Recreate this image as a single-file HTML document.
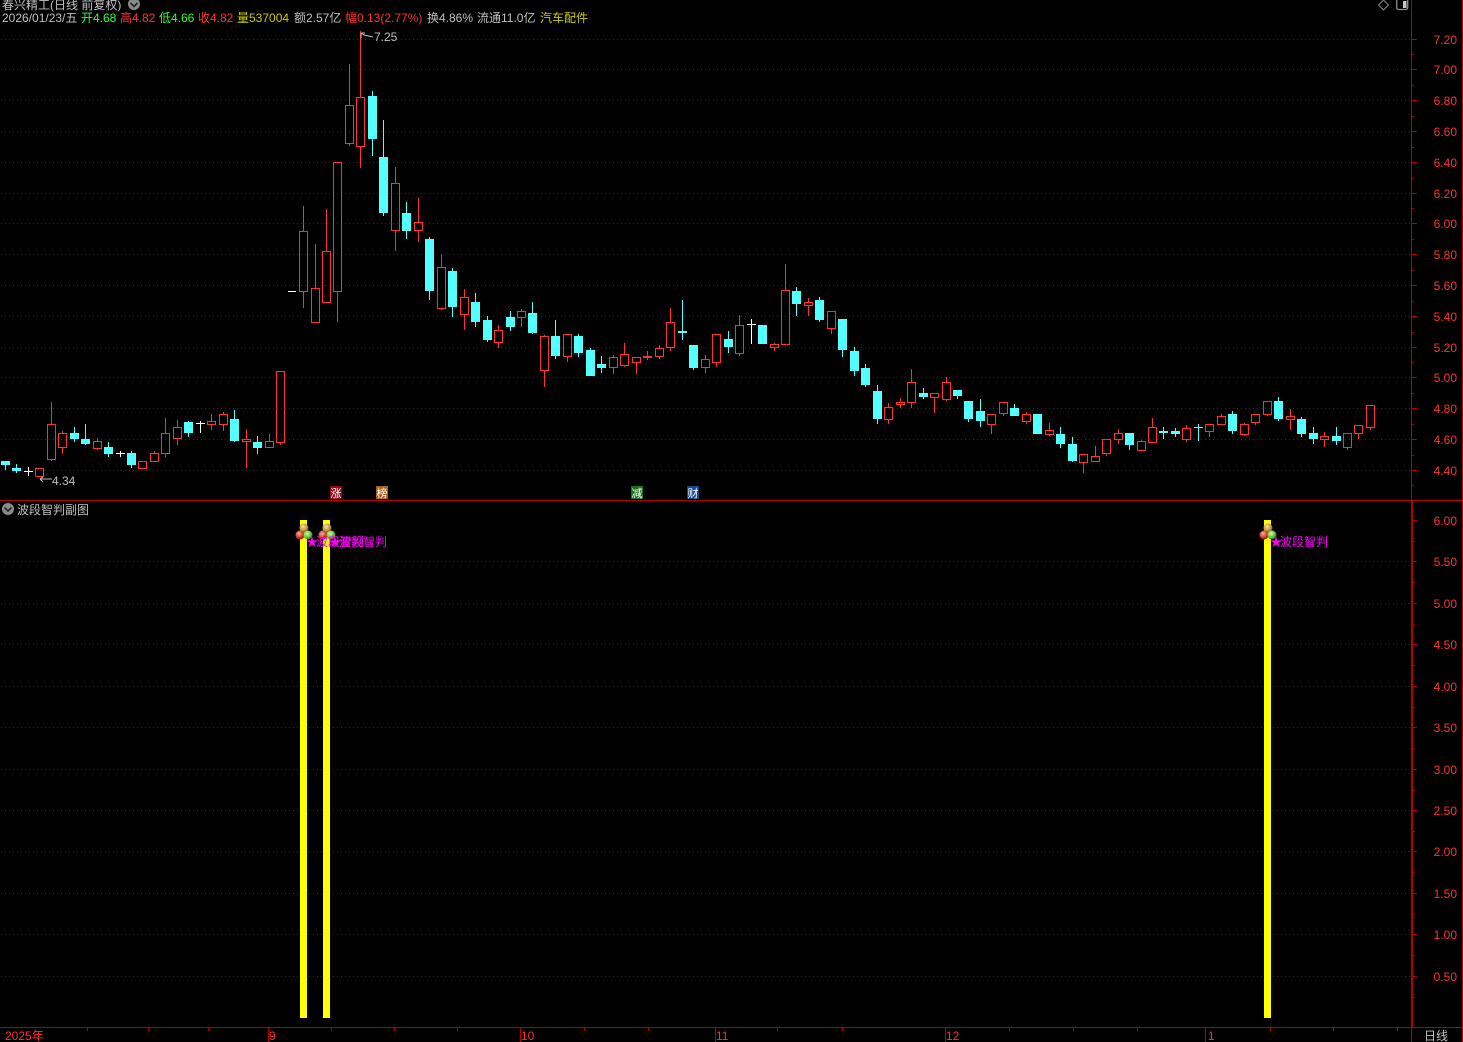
<!DOCTYPE html>
<html lang="zh"><head><meta charset="utf-8"><title>春兴精工</title>
<style>
html,body{margin:0;padding:0;background:#000;width:1463px;height:1042px;overflow:hidden}
svg{display:block}
text{font-family:"Liberation Sans","WenQuanYi Zen Hei","Noto Sans CJK SC",sans-serif;font-size:12px}
.g{fill:#c0c0c0}.r{fill:#ff3232}.v{fill:#32ff32}.y{fill:#cccc00}.m{fill:#ff00ff}.w{fill:#fff;font-size:11px}
</style></head><body>
<svg width="1463" height="1042" viewBox="0 0 1463 1042" xmlns="http://www.w3.org/2000/svg">
<defs>
<pattern id="dot" patternUnits="userSpaceOnUse" x="0" y="0" width="4" height="1"><rect x="1" y="0" width="1" height="1" fill="#a00000"/></pattern>
<radialGradient id="bt" cx=".4" cy=".35" r=".7"><stop offset="0" stop-color="#f0e0b0"/><stop offset=".6" stop-color="#c89a40"/><stop offset="1" stop-color="#604010"/></radialGradient>
<radialGradient id="br" cx=".4" cy=".35" r=".7"><stop offset="0" stop-color="#f4b0a0"/><stop offset=".6" stop-color="#d83a30"/><stop offset="1" stop-color="#701010"/></radialGradient>
<radialGradient id="bg" cx=".4" cy=".35" r=".7"><stop offset="0" stop-color="#d8f4b0"/><stop offset=".6" stop-color="#60c830"/><stop offset="1" stop-color="#206010"/></radialGradient>
</defs>
<rect width="1463" height="1042" fill="#000"/>
<!-- grid -->
<path shape-rendering="crispEdges" fill="url(#dot)" d="M0 39h1411v1H0zM0 69h1411v1H0zM0 100h1411v1H0zM0 131h1411v1H0zM0 162h1411v1H0zM0 193h1411v1H0zM0 223h1411v1H0zM0 254h1411v1H0zM0 285h1411v1H0zM0 316h1411v1H0zM0 347h1411v1H0zM0 377h1411v1H0zM0 408h1411v1H0zM0 439h1411v1H0zM0 470h1411v1H0zM0 561h1411v1H0zM0 603h1411v1H0zM0 644h1411v1H0zM0 686h1411v1H0zM0 727h1411v1H0zM0 769h1411v1H0zM0 810h1411v1H0zM0 851h1411v1H0zM0 893h1411v1H0zM0 934h1411v1H0zM0 976h1411v1H0z"/>
<!-- frame -->
<path shape-rendering="crispEdges" stroke="#b40000" fill="none" d="M0 500.5H1463M0 1027.5H1463M1411.5 0V1042M1412.5 500V1027M1462.5 0V1042
M1412 39.5h5M1412 69.5h5M1412 100.5h5M1412 131.5h5M1412 162.5h5M1412 193.5h5M1412 223.5h5M1412 254.5h5M1412 285.5h5M1412 316.5h5M1412 347.5h5M1412 377.5h5M1412 408.5h5M1412 439.5h5M1412 470.5h5
M1412 54.5h2M1412 85.5h2M1412 116.5h2M1412 147.5h2M1412 178.5h2M1412 208.5h2M1412 239.5h2M1412 270.5h2M1412 301.5h2M1412 332.5h2M1412 362.5h2M1412 393.5h2M1412 424.5h2M1412 455.5h2M1412 485.5h2
M1413 520.5h4M1413 561.5h4M1413 603.5h4M1413 644.5h4M1413 686.5h4M1413 727.5h4M1413 769.5h4M1413 810.5h4M1413 851.5h4M1413 893.5h4M1413 934.5h4M1413 976.5h4
M1413 541.5h2M1413 582.5h2M1413 624.5h2M1413 665.5h2M1413 707.5h2M1413 748.5h2M1413 790.5h2M1413 831.5h2M1413 872.5h2M1413 914.5h2M1413 955.5h2M1413 997.5h2
M268.5 1028V1042M520.5 1028V1042M715.5 1028V1042M945.5 1028V1042M1205.5 1028V1042
M87.5 1028v3M148.5 1028v3M208.5 1028v3M331.5 1028v3M394.5 1028v3M457.5 1028v3M584.5 1028v3M648.5 1028v3M777.5 1028v3M842.5 1028v3M1009.5 1028v3M1073.5 1028v3M1137.5 1028v3M1270.5 1028v3M1333.5 1028v3M1397.5 1028v3"/>
<!-- cyan candles -->
<path shape-rendering="crispEdges" stroke="#54ffff" stroke-width="1" fill="none" d="M5.5 461V470M16.5 464V473M74.5 427V442M85.5 424V445M108.5 442V457M131.5 451V468M188.5 421V437M234.5 410V442M257.5 436V454M372.5 91V156M383.5 120V216M406.5 202V239M429.5 237V300M452.5 268V317M475.5 293V327M487.5 316V342M510.5 311V331M532.5 302V334M555.5 320V359M578.5 334V357M590.5 348V376M601.5 356V373M682.5 300V340M693.5 345V370M728.5 331V353M796.5 287V316M819.5 297V322M842.5 319V357M854.5 347V376M865.5 364V387M877.5 385V424M923.5 388V399M957.5 390V399M968.5 401V422M980.5 399V427M1014.5 404V416M1060.5 427V448M1072.5 437V462M1129.5 433V450M1163.5 427V439M1175.5 428V437M1198.5 424V441M1232.5 411V434M1278.5 397V421M1301.5 417V437M1313.5 427V444M1336.5 427V445"/>
<path shape-rendering="crispEdges" fill="#54ffff" d="M1 461h9V465h-9zM12 468h9V471h-9zM70 433h9V439h-9zM81 439h9V444h-9zM104 447h9V454h-9zM127 453h9V465h-9zM184 422h9V433h-9zM230 419h9V441h-9zM253 442h9V448h-9zM368 96h9V139h-9zM379 157h9V213h-9zM402 213h9V231h-9zM425 239h9V291h-9zM448 271h9V307h-9zM471 302h9V322h-9zM483 320h9V340h-9zM506 317h9V327h-9zM528 313h9V333h-9zM551 336h9V356h-9zM574 336h9V353h-9zM586 350h9V376h-9zM597 364h9V368h-9zM678 331h9V333h-9zM689 345h9V368h-9zM724 339h9V347h-9zM758 325h9V344h-9zM792 291h9V304h-9zM815 300h9V320h-9zM838 319h9V350h-9zM850 351h9V371h-9zM861 368h9V385h-9zM873 391h9V419h-9zM919 393h9V397h-9zM953 390h9V396h-9zM964 401h9V419h-9zM976 411h9V421h-9zM1010 408h9V416h-9zM1033 414h9V434h-9zM1056 434h9V444h-9zM1068 444h9V461h-9zM1125 433h9V445h-9zM1159 431h9V433h-9zM1171 431h9V434h-9zM1194 427h9V428h-9zM1228 414h9V431h-9zM1274 401h9V419h-9zM1297 419h9V434h-9zM1309 433h9V439h-9zM1332 436h9V441h-9z"/>
<!-- white crosses -->
<path shape-rendering="crispEdges" stroke="#fff" fill="none" d="M24 471.5h9M28.5 467V476M116 453.5h9M120.5 451V457M196 423.5h9M200.5 421V433M288 291.5h8M747 324.5h9M751.5 319V344"/>
<!-- red candles -->
<path shape-rendering="crispEdges" fill="#ff3232" d="M643 356h9v2h-9z"/>
<path shape-rendering="crispEdges" stroke="#ff3232" stroke-width="1" fill="none" d="M35.5 468.5h8V476.5h-8zM47.5 424.5h8V459.5h-8zM51.5 402V424M51.5 460V461M58.5 433.5h8V447.5h-8zM62.5 431V433M62.5 448V454M93.5 441.5h8V448.5h-8zM97.5 438V441M97.5 449V450M138.5 461.5h8V468.5h-8zM150.5 453.5h8V461.5h-8zM154.5 451V453M161.5 433.5h8V453.5h-8zM165.5 418V433M165.5 454V457M173.5 427.5h8V438.5h-8zM177.5 420V427M177.5 439V445M207.5 421.5h8V424.5h-8zM211.5 414V421M211.5 425V430M219.5 414.5h8V424.5h-8zM223.5 412V414M223.5 425V431M242.5 439.5h8V441.5h-8zM246.5 429V439M246.5 442V468M265.5 441.5h8V447.5h-8zM269.5 434V441M276.5 371.5h8V442.5h-8zM280.5 443V445
M299.5 231.5h8V291.5h-8zM303.5 206V231M303.5 292V308M311.5 288.5h8V322.5h-8zM315.5 244V288M322.5 251.5h8V302.5h-8zM326.5 209V251M333.5 162.5h8V291.5h-8zM337.5 292V322M345.5 105.5h8V143.5h-8zM349.5 64V105M349.5 144V146M356.5 97.5h8V146.5h-8zM360.5 31V97M360.5 147V168M391.5 183.5h8V230.5h-8zM395.5 167V183M395.5 231V251M414.5 222.5h8V230.5h-8zM418.5 198V222M418.5 231V242M437.5 267.5h8V308.5h-8zM441.5 255V267M441.5 309V310M460.5 297.5h8V314.5h-8zM464.5 289V297M464.5 315V330M494.5 330.5h8V342.5h-8zM498.5 325V330M498.5 343V348M517.5 311.5h8V317.5h-8zM521.5 309V311M521.5 318V327M540.5 336.5h8V370.5h-8zM544.5 335V336M544.5 371V387M563.5 334.5h8V356.5h-8zM567.5 357V362M609.5 357.5h8V367.5h-8zM613.5 355V357M613.5 368V374M620.5 354.5h8V365.5h-8zM624.5 343V354M624.5 366V367M632.5 357.5h8V362.5h-8zM636.5 363V374M647.5 351V360M655.5 348.5h8V356.5h-8zM659.5 345V348M659.5 357V359M666.5 322.5h8V347.5h-8zM670.5 308V322M670.5 348V351M701.5 359.5h8V367.5h-8zM705.5 355V359M705.5 368V373M712.5 334.5h8V362.5h-8zM716.5 363V367M735.5 325.5h8V353.5h-8zM739.5 315V325M739.5 354V356M770.5 344.5h8V347.5h-8zM774.5 343V344M774.5 348V351M781.5 290.5h8V344.5h-8zM785.5 264V290M804.5 302.5h8V305.5h-8zM808.5 298V302M808.5 306V316M827.5 311.5h8V328.5h-8zM831.5 329V334M884.5 407.5h8V419.5h-8zM888.5 403V407M888.5 420V424M896.5 402.5h8V404.5h-8zM900.5 398V402M900.5 405V408M907.5 382.5h8V402.5h-8zM911.5 369V382M911.5 403V408M930.5 393.5h8V397.5h-8zM934.5 398V413M942.5 382.5h8V399.5h-8zM946.5 377V382M946.5 400V401
M987.5 414.5h8V424.5h-8zM991.5 425V434M999.5 402.5h8V413.5h-8zM1003.5 414V416M1022.5 414.5h8V421.5h-8zM1026.5 412V414M1026.5 422V424M1045.5 430.5h8V434.5h-8zM1049.5 423V430M1049.5 435V436M1079.5 454.5h8V462.5h-8zM1083.5 463V473M1091.5 456.5h8V461.5h-8zM1095.5 446V456M1102.5 439.5h8V453.5h-8zM1106.5 454V456M1114.5 433.5h8V439.5h-8zM1118.5 429V433M1118.5 440V444M1137.5 441.5h8V450.5h-8zM1141.5 440V441M1148.5 427.5h8V442.5h-8zM1152.5 418V427M1182.5 428.5h8V439.5h-8zM1186.5 425V428M1186.5 440V442M1205.5 424.5h8V431.5h-8zM1209.5 432V437M1217.5 416.5h8V424.5h-8zM1221.5 414V416M1240.5 424.5h8V434.5h-8zM1244.5 423V424M1244.5 435V436M1251.5 414.5h8V422.5h-8zM1255.5 423V425M1263.5 401.5h8V414.5h-8zM1267.5 415V416M1286.5 416.5h8V419.5h-8zM1290.5 409V416M1290.5 420V430M1320.5 436.5h8V439.5h-8zM1324.5 432V436M1324.5 440V447M1343.5 433.5h8V447.5h-8zM1347.5 448V450M1354.5 425.5h8V433.5h-8zM1358.5 434V439M1366.5 405.5h8V427.5h-8zM1370.5 428V430"/>
<!-- hi/lo arrows -->
<path stroke="#c0c0c0" fill="none" d="M361 33L364 35L373 37M361 33V38M361 33H365M40 479H52M40 479L43 477M40 479L43 482"/>
<text x="374" y="41" class="g">7.25</text>
<text x="52" y="485" class="g">4.34</text>
<!-- header -->
<text x="2" y="9" class="g">春兴精工(日线 前复权)</text>
<circle cx="134" cy="4" r="6" fill="#8a8a8a"/><path d="M130.5 3l3.5 3.5 3.5-3.5" stroke="#222" stroke-width="1.6" fill="none"/>
<text x="2" y="22" class="g">2026/01/23/五</text>
<text x="81" y="22" class="v">开4.68</text>
<text x="120" y="22" class="r">高4.82</text>
<text x="159" y="22" class="v">低4.66</text>
<text x="198" y="22" class="r">收4.82</text>
<text x="237" y="22" class="y">量537004</text>
<text x="294" y="22" class="g">额2.57亿</text>
<text x="345" y="22" class="r">幅0.13(2.77%)</text>
<text x="427" y="22" class="g">换4.86%</text>
<text x="477" y="22" class="g">流通11.0亿</text>
<text x="540" y="22" class="y">汽车配件</text>
<!-- top right icons -->
<path d="M1383.5 0L1388.5 5L1383.5 10L1378.5 5Z" stroke="#888" fill="none"/>
<path d="M1396.7 0V7.5a2 2 0 0 0 2 2h7a2 2 0 0 0 2-2V0" stroke="#909090" stroke-width="1.3" fill="none"/><rect x="1403" y="1" width="3.5" height="7" fill="#c8c8c8"/>
<!-- price axis -->
<g text-anchor="end">
<text x="1457" y="44" class="r">7.20</text><text x="1457" y="74" class="r">7.00</text><text x="1457" y="105" class="r">6.80</text><text x="1457" y="136" class="r">6.60</text><text x="1457" y="167" class="r">6.40</text><text x="1457" y="198" class="r">6.20</text><text x="1457" y="228" class="r">6.00</text><text x="1457" y="259" class="r">5.80</text><text x="1457" y="290" class="r">5.60</text><text x="1457" y="321" class="r">5.40</text><text x="1457" y="352" class="r">5.20</text><text x="1457" y="382" class="r">5.00</text><text x="1457" y="413" class="r">4.80</text><text x="1457" y="444" class="r">4.60</text><text x="1457" y="475" class="r">4.40</text>
<text x="1457" y="525" class="r">6.00</text><text x="1457" y="566" class="r">5.50</text><text x="1457" y="608" class="r">5.00</text><text x="1457" y="649" class="r">4.50</text><text x="1457" y="691" class="r">4.00</text><text x="1457" y="732" class="r">3.50</text><text x="1457" y="774" class="r">3.00</text><text x="1457" y="815" class="r">2.50</text><text x="1457" y="856" class="r">2.00</text><text x="1457" y="898" class="r">1.50</text><text x="1457" y="939" class="r">1.00</text><text x="1457" y="981" class="r">0.50</text>
</g>
<!-- event badges -->
<rect x="330" y="486" width="12" height="13" fill="#8c0a14"/><text x="330.5" y="497" class="w">涨</text>
<rect x="376" y="486" width="12" height="13" fill="#a8601c"/><text x="376.5" y="497" class="w">榜</text>
<rect x="631" y="486" width="12" height="13" fill="#1a701a"/><text x="631.5" y="497" class="w">减</text>
<rect x="687" y="486" width="12" height="13" fill="#14488c"/><text x="687.5" y="497" class="w">财</text>
<!-- sub panel -->
<circle cx="8" cy="509" r="6" fill="#8a8a8a"/><path d="M4.5 507.5l3.5 3.5 3.5-3.5" stroke="#222" stroke-width="1.6" fill="none"/>
<text x="17" y="514" class="g">波段智判副图</text>
<rect x="300" y="520" width="7" height="498" fill="#ffff00"/>
<rect x="323" y="520" width="7" height="498" fill="#ffff00"/>
<rect x="1264" y="520" width="7" height="498" fill="#ffff00"/>
<g>
<circle cx="304" cy="528" r="4.5" fill="url(#bt)"/><circle cx="300" cy="535" r="4.5" fill="url(#br)"/><circle cx="308" cy="535" r="4.5" fill="url(#bg)"/>
<circle cx="327" cy="528" r="4.5" fill="url(#bt)"/><circle cx="323" cy="535" r="4.5" fill="url(#br)"/><circle cx="331" cy="535" r="4.5" fill="url(#bg)"/>
<circle cx="1268" cy="528" r="4.5" fill="url(#bt)"/><circle cx="1264" cy="535" r="4.5" fill="url(#br)"/><circle cx="1272" cy="535" r="4.5" fill="url(#bg)"/>
</g>
<text x="306" y="546" class="m">★</text><text x="316" y="546" class="m">波段智判</text>
<text x="329" y="546" class="m">★</text><text x="339" y="546" class="m">波段智判</text>
<text x="1270" y="546" class="m">★</text><text x="1280" y="546" class="m">波段智判</text>
<!-- date axis -->
<text x="5" y="1040" class="r">2025年</text>
<text x="269" y="1040" class="r">9</text>
<text x="521" y="1040" class="r">10</text>
<text x="716" y="1040" class="r">11</text>
<text x="946" y="1040" class="r">12</text>
<text x="1208" y="1040" class="r">1</text>
<text x="1424" y="1040" class="g">日线</text>
</svg>
</body></html>
